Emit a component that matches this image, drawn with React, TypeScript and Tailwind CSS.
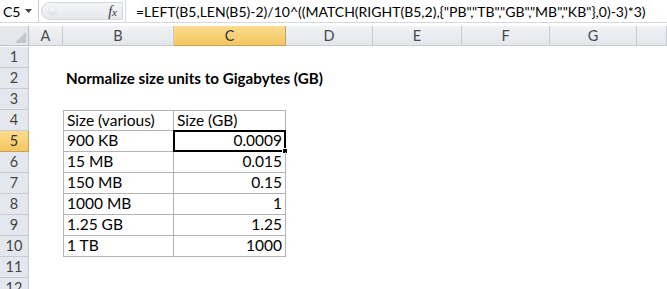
import React from "react";

const cols = ["A", "B", "C", "D", "E", "F", "G", ""];
const colW = "grid-cols-[29px_34px_111px_112px_87px_89px_88px_87px_1fr]";

const formula = '=LEFT(B5,LEN(B5)-2)/10^((MATCH(RIGHT(B5,2),{"PB","TB","GB","MB","KB"},0)-3)*3)';

const table: [string, string][] = [
  ["900 KB", "0.0009"],
  ["15 MB", "0.015"],
  ["150 MB", "0.15"],
  ["1000 MB", "1"],
  ["1.25 GB", "1.25"],
  ["1 TB", "1000"],
];

const font = { fontFamily: "Lato, 'Open Sans', sans-serif" };

const FormulaBar = () => (
  <div className="flex h-[23px] border-b border-[#d4d7dc] bg-white">
    <div className="flex w-[39px] shrink-0 items-center justify-between border-r border-[#c9ccd1] pl-[3px] pr-[6px]">
      <span className="text-[14px] text-black">C5</span>
      <svg width="7" height="4" viewBox="0 0 7 4">
        <path d="M0 0h7L3.5 4z" fill="#444" />
      </svg>
    </div>
    <div className="my-[2px] ml-[2px] flex w-[82px] shrink-0 items-center justify-between rounded-l-full border border-[#d2d5da] bg-gradient-to-b from-[#f4f5f7] to-[#e6e8eb] pl-[6px] pr-[5px]">
      <span className="h-[9px] w-[9px] rounded-full border border-[#e3e5e8] bg-gradient-to-b from-white to-[#d9dbde]" />
      <span className="text-[14px] italic text-[#333]" style={{ fontFamily: "'Liberation Serif', serif" }}>
        f<span className="text-[11px]">x</span>
      </span>
    </div>
    <div className="ml-[2px] flex min-w-0 flex-1 items-center overflow-hidden whitespace-nowrap border-l border-[#d4d7dc] pl-[10px] text-[14px] text-black">
      {formula}
    </div>
  </div>
);

export default function App() {
  const rows = Array.from({ length: 12 }, (_, i) => i + 1);

  const cellContent = (r: number, c: number) => {
    if (r === 2 && c === 2)
      return (
        <span className="absolute left-[3px] top-[3px] whitespace-nowrap text-[15.2px] font-bold">
          Normalize size units to Gigabytes (GB)
        </span>
      );
    if (r === 4 && c === 2) return "Size (various)";
    if (r === 4 && c === 3) return "Size (GB)";
    if (r >= 5 && r <= 10) return c === 2 ? table[r - 5][0] : c === 3 ? table[r - 5][1] : null;
    return null;
  };

  return (
    <div className="h-[289px] w-[667px] overflow-hidden bg-white text-[15.5px] text-black" style={font}>
      <FormulaBar />
      <div className="h-[3px] bg-white" />
      <div className={`grid ${colW} auto-rows-[21px]`}>
        {/* header row */}
        <div className="relative h-[20px] border-b border-r border-[#b9bec6] bg-[#e4e7ec]">
          <svg className="absolute bottom-[2px] right-[2px]" width="11" height="11" viewBox="0 0 11 11">
            <path d="M11 0v11H0z" fill="#c3c7cd" />
          </svg>
        </div>
        {cols.map((c, i) => (
          <div
            key={i}
            className={`flex h-[20px] items-center justify-center border-b border-r text-[14.5px] ${
              c === "C"
                ? "border-[#c4a35a] bg-gradient-to-b from-[#fbdc8f] to-[#f4c65f] text-[#333]"
                : "border-[#c8ccd2] bg-gradient-to-b from-[#f1f3f6] to-[#e2e5ea] text-[#4a4a4a]"
            }`}
          >
            {c}
          </div>
        ))}
        {rows.map((r) => (
          <React.Fragment key={r}>
            <div
              className={`flex items-center justify-center border-b border-r text-[14.5px] ${
                r === 5
                  ? "border-[#c4a35a] bg-gradient-to-b from-[#fbdc8f] to-[#f4c65f] text-[#333]"
                  : "border-[#c8ccd2] bg-[#e4e8ee] text-[#444]"
              }`}
            >
              {r}
            </div>
            {cols.map((_, ci) => {
              const c = ci + 1;
              const inTable = r >= 4 && r <= 10 && (c === 2 || c === 3);
              const active = r === 5 && c === 3;
              return (
                <div
                  key={ci}
                  className={`relative flex items-center px-[3px] leading-none ${
                    c === 3 && r >= 5 ? "justify-end" : ""
                  } ${inTable ? "border-b border-r border-[#b4b4b4]" : ""} ${
                    inTable && c === 2 ? "border-l" : ""
                  } ${inTable && r === 4 ? "border-t" : ""}`}
                >
                  {cellContent(r, c)}
                  {active && (
                    <>
                      <div className="pointer-events-none absolute -bottom-[1px] -left-[1px] -right-[1px] -top-[1px] border-2 border-black" />
                      <div className="absolute -bottom-[3px] -right-[3px] h-[6px] w-[6px] border border-white bg-black" />
                    </>
                  )}
                </div>
              );
            })}
          </React.Fragment>
        ))}
      </div>
    </div>
  );
}
